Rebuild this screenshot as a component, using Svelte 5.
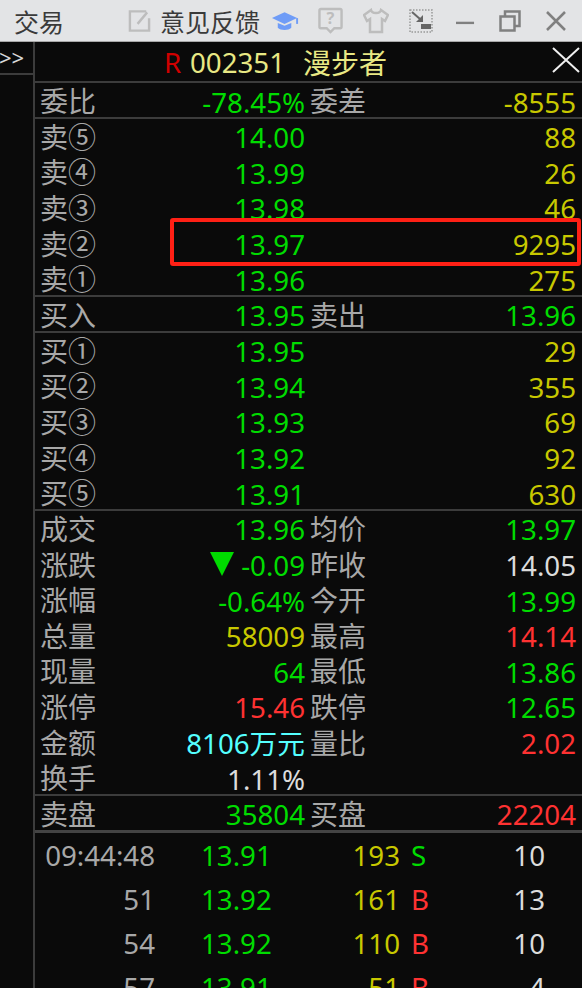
<script>
  const g = 'green', y = 'yellow', r = 'red', c = 'cyan', w = 'white';
  const sections = [
    { rows: [['委比', '-78.45%', g, '委差', '-8555', y]] },
    { rows: [
      ['卖⑤', '14.00', g, '', '88', y],
      ['卖④', '13.99', g, '', '26', y],
      ['卖③', '13.98', g, '', '46', y],
      ['卖②', '13.97', g, '', '9295', y],
      ['卖①', '13.96', g, '', '275', y]
    ] },
    { rows: [['买入', '13.95', g, '卖出', '13.96', g]] },
    { rows: [
      ['买①', '13.95', g, '', '29', y],
      ['买②', '13.94', g, '', '355', y],
      ['买③', '13.93', g, '', '69', y],
      ['买④', '13.92', g, '', '92', y],
      ['买⑤', '13.91', g, '', '630', y]
    ] },
    { rows: [
      ['成交', '13.96', g, '均价', '13.97', g],
      ['涨跌', '-0.09', g, '昨收', '14.05', w, true],
      ['涨幅', '-0.64%', g, '今开', '13.99', g],
      ['总量', '58009', y, '最高', '14.14', r],
      ['现量', '64', g, '最低', '13.86', g],
      ['涨停', '15.46', r, '跌停', '12.65', g],
      ['金额', '8106万元', c, '量比', '2.02', r],
      ['换手', '1.11%', w, '', '', w]
    ] },
    { rows: [['卖盘', '35804', g, '买盘', '22204', r]], heavy: true }
  ];
  const ticks = [
    ['09:44:48', '13.91', '193', 'S', g, '10'],
    ['51', '13.92', '161', 'B', r, '13'],
    ['54', '13.92', '110', 'B', r, '10'],
    ['57', '13.91', '51', 'B', r, '4']
  ];
</script>

<div class="window">
  <header class="titlebar">
    <span class="title">交易</span>
    <svg class="ic edit" viewBox="0 0 24 24"><path d="M19 2H2v20h20V9" /><path d="M20 3L10 15" /></svg>
    <span class="feedback">意见反馈</span>
    <svg class="ic cap" viewBox="0 0 30 22"><path class="fill" d="M14 2L1 8l13 6 13-6z" /><path class="fill" d="M7 13v5c3 3 11 3 14 0v-5l-7 3z" /><path class="capcord" d="M27 8v6" /></svg>
    <svg class="ic help" viewBox="0 0 26 28"><path d="M3 1.500h20a1.500 1.500 0 0 1 1.500 1.500v17a1.500 1.500 0 0 1-1.500 1.500h-6l-4 4-4-4H3A1.500 1.500 0 0 1 1.500 20V3A1.500 1.500 0 0 1 3 1.500z" /><text x="13" y="17" text-anchor="middle">?</text></svg>
    <svg class="ic shirt" viewBox="0 0 26 26"><path d="M8 2L1 7l3 6 3-2v13h12V11l3 2 3-6-7-5c-1 4-9 4-10 0z" /></svg>
    <svg class="ic shrink" viewBox="0 0 24 24"><path class="dots" d="M1 1h22v22H1z" /><path class="darkline" d="M3 3l8 7" /><path class="fill2" d="M7 13h7V6z" /><rect class="fill2" x="12" y="15" width="10" height="5" /></svg>
    <svg class="ic min" viewBox="0 0 20 20"><path d="M0 12h19" /></svg>
    <svg class="ic restore" viewBox="0 0 22 22"><path d="M1.500 6.500h14v14h-14z" /><path d="M6 6V1.500h14.500V16H16" /></svg>
    <svg class="ic close" viewBox="0 0 22 22"><path d="M2 2l18 18M20 2L2 20" /></svg>
  </header>

  <div class="body">
    <aside class="side"><div class="expand">&gt;&gt;</div></aside>
    <main class="panel">
      <div class="stock">
        <span class="flag">R</span>
        <span class="code">002351</span>
        <span class="name">漫步者</span>
        <svg class="x" viewBox="0 0 28 26"><path d="M1 1l26 24M27 1L1 25" /></svg>
      </div>

      <div class="quotes">
        {#each sections as s}
          <section class="sec" class:heavy={s.heavy}>
            {#each s.rows as row}
              <div class="row">
                <span class="label">{row[0]}</span>
                <span class="val {row[2]}">{#if row[6]}<i class="tri"></i>{/if}{row[1]}</span>
                <span class="label l2">{row[3]}</span>
                <span class="val {row[5]}">{row[4]}</span>
              </div>
            {/each}
          </section>
        {/each}
        <div class="marker"></div>
      </div>

      <div class="ticks">
        {#each ticks as t}
          <div class="tick">
            <span class="time">{t[0]}</span>
            <span class="price green">{t[1]}</span>
            <span class="vol yellow">{t[2]}</span>
            <span class="mark {t[4]}">{t[3]}</span>
            <span class="cnt white">{t[5]}</span>
          </div>
        {/each}
      </div>
    </main>
  </div>
</div>

<style>
  :global(body) { margin: 0; background: #0a0a0a; }
  .window {
    width: 582px; height: 988px; overflow: hidden; display: flex; flex-direction: column;
    background: #0a0a0a;
    font-family: "Noto Sans", "Noto Sans CJK SC", sans-serif;
    font-size: 27.700px;
  }
  .titlebar {
    height: 42px; flex: none; box-sizing: border-box; background: #e3e4e6;
    border-bottom: 1px solid #a8a8a8;
    display: flex; align-items: center; padding-left: 14px; color: #3a3a3a; font-size: 25px;
  }
  .title { width: 114px; font-family: "Noto Sans CJK SC", sans-serif; }
  .feedback { margin-left: 9px; width: 100px; font-size: 25px; white-space: nowrap; font-family: "Noto Sans CJK SC", sans-serif; }
  .ic { flex: none; fill: none; stroke: #bdbdbd; stroke-width: 2.500; }
  .ic.edit { width: 23px; height: 24px; }
  .ic.cap { width: 29px; height: 22px; margin-left: 11px; }
  .ic.cap .fill { fill: #6f9cf7; stroke: none; }
  .ic.cap .capcord { stroke: #6f9cf7; stroke-width: 2; }
  .ic.help { width: 25px; height: 28px; margin-left: 18px; }
  .ic.help text { font-size: 17px; fill: #bdbdbd; stroke: none; font-family: "Noto Sans", sans-serif; font-weight: 700; }
  .ic.shirt { width: 26px; height: 26px; margin-left: 20px; }
  .ic.shrink { width: 24px; height: 24px; margin-left: 20px; }
  .ic.shrink .dots { stroke: #999; stroke-width: 1.500; stroke-dasharray: 1.500 1.500; }
  .ic.shrink .darkline { stroke: #666; stroke-width: 2; }
  .ic.shrink .fill2 { fill: #666; stroke: none; }
  .ic.min { width: 19px; height: 20px; margin-left: 23px; stroke: #808080; }
  .ic.restore { width: 22px; height: 22px; margin-left: 24px; stroke: #808080; }
  .ic.close { width: 22px; height: 22px; margin-left: 24px; stroke: #808080; }

  .body { flex: 1; display: flex; min-height: 0; }
  .side { width: 35px; flex: none; box-sizing: border-box; border-right: 2px solid #3c3c3c; }
  .expand {
    height: 33px; box-sizing: border-box; border-bottom: 2px solid #3c3c3c; color: #d8d8d8;
    font-size: 22px; line-height: 30px; margin-left: -1px;
  }
  .panel { flex: 1; min-width: 0; display: flex; flex-direction: column; }
  .stock {
    height: 41px; flex: none; box-sizing: border-box; border-bottom: 2px solid #3c3c3c;
    position: relative; display: flex; align-items: center; padding-left: 129px; line-height: 42px;
  }
  .flag { color: #d00000; width: 26px; }
  .code { color: #e8e884; width: 113px; }
  .name { color: #e8e884; font-size: 28px; font-family: "Noto Sans CJK SC", sans-serif; }
  .x { position: absolute; right: 2px; top: 5px; width: 28px; height: 26px; fill: none; stroke: #f0f0f0; stroke-width: 2; }

  .quotes { position: relative; flex: none; }
  .sec { border-bottom: 2px solid #3c3c3c; }
  .sec.heavy { border-bottom-width: 3px; border-color: #444; }
  .row {
    display: grid; grid-template-columns: 135px 129px 89px 1fr; height: 35.600px; box-sizing: border-box;
    padding: 0 6px; align-items: center; line-height: 34px;
  }
  .sec .row:last-child { height: 33.800px; }
  .label { color: #a8a8a8; white-space: nowrap; font-size: 28px; margin: 0 0 3px -1px; font-family: "Noto Sans CJK SC", sans-serif; }
  .l2 { padding-left: 6px; }
  .val { text-align: right; white-space: nowrap; }
  .tri {
    display: inline-block; width: 0; height: 0; margin-right: 7px;
    border-left: 12px solid transparent; border-right: 12px solid transparent; border-top: 24px solid #00dc00;
    vertical-align: 0;
  }
  .marker {
    position: absolute; left: 135px; right: 1px; top: 135px; height: 48px; box-sizing: border-box;
    border: 4px solid #ff2015; border-radius: 3px;
  }

  .green { color: #00dc00; }
  .yellow { color: #c8c800; }
  .red { color: #ff3232; }
  .cyan { color: #54ffff; }
  .white { color: #dcdcdc; }

  .tick { display: flex; height: 44px; align-items: center; line-height: 44px; white-space: nowrap; }
  .time { color: #a8a8a8; width: 120px; text-align: right; }
  .price { margin-left: 46px; width: 90px; }
  .vol { width: 109px; text-align: right; }
  .mark { margin-left: 11px; width: 31px; }
  .cnt { width: 103px; text-align: right; }
</style>
